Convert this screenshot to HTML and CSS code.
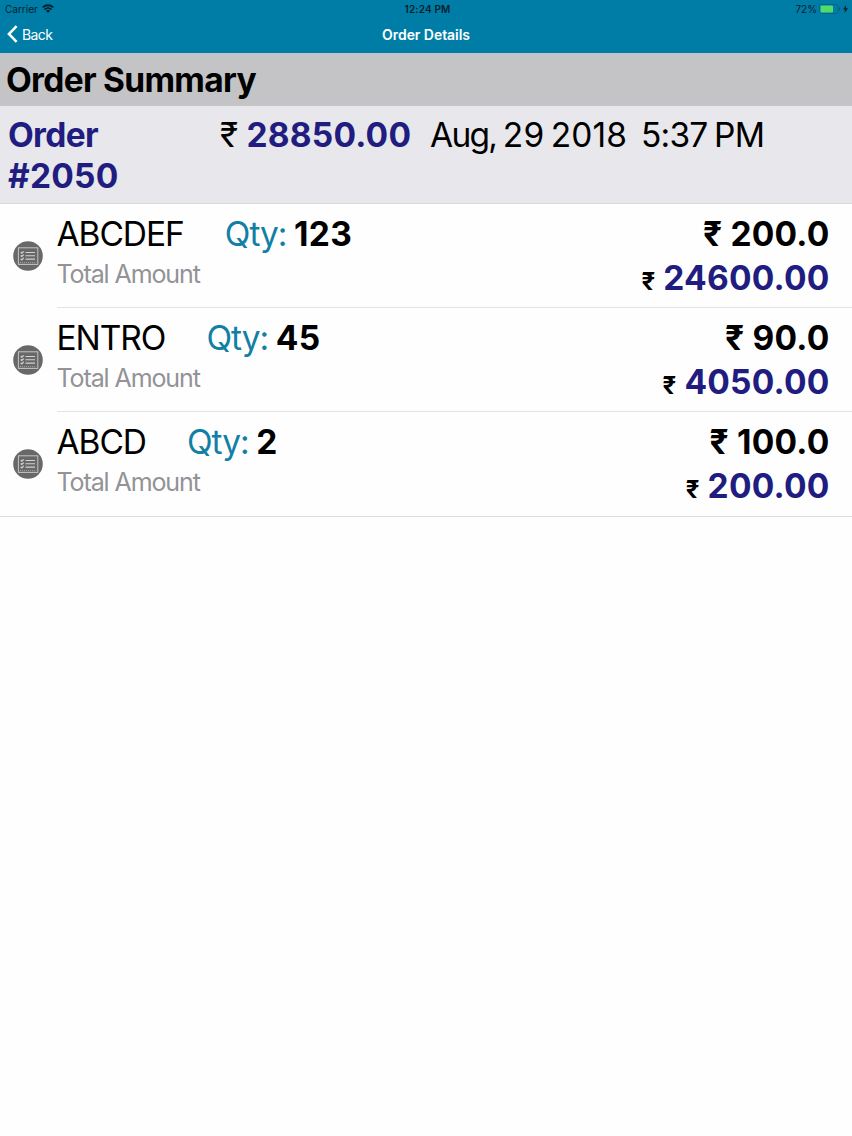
FILE: index.html
```html
<!DOCTYPE html>
<html lang="en">
<head>
    <meta charset="UTF-8">
    <meta name="viewport" content="width=device-width, initial-scale=1.0">
    <title>Order Details</title>
    <link rel="stylesheet" href="styles.css">
</head>
<body>
    <!-- Status bar and navigation bar -->
    <header class="top-bar">
        <div class="status-bar">
            <div class="status-left">
                <span class="carrier">Carrier</span>
                <svg class="wifi-icon" viewBox="0 0 12 9" width="12" height="9">
                    <path d="M0.7 3.4a7.6 7.6 0 0 1 10.6 0M2.5 5.6a5 5 0 0 1 7 0" fill="none" stroke="#06202b" stroke-width="1.8"/>
                    <path d="M6 8.9L4 6.8a2.8 2.8 0 0 1 4 0z" fill="#06202b"/>
                </svg>
            </div>
            <span class="clock">12:24 PM</span>
            <div class="status-right">
                <span class="battery-text">72%</span>
                <svg class="battery-icon" viewBox="0 0 22 10" width="22" height="10">
                    <rect x="0.5" y="0.5" width="18.5" height="9" rx="2" fill="none" stroke="#06648a" stroke-width="1"/>
                    <rect x="1.5" y="1.5" width="12.5" height="7" rx="0.8" fill="#4fdc6b"/>
                    <path d="M20.2 3.2a2 2 0 0 1 0 3.6z" fill="#064f6d"/>
                </svg>
                <svg class="bolt-icon" viewBox="0 0 5 8" width="5" height="8">
                    <path d="M3.2 0L0 4.6h2L1.6 8L5 3.3H2.9z" fill="#06202b"/>
                </svg>
            </div>
        </div>
        <nav class="nav-bar">
            <a class="back-button">
                <svg viewBox="0 0 11 18" width="11" height="18">
                    <path d="M9.6 1.2L1.9 9l7.7 7.8" fill="none" stroke="#fff" stroke-width="2.5"/>
                </svg>
                <span>Back</span>
            </a>
            <h1 class="nav-title">Order Details</h1>
        </nav>
    </header>

    <h2 class="section-title"><span>Order Summary</span></h2>

    <section class="order-header">
        <div class="order-number"><span class="order-word">Order</span> #2050</div>
        <div class="order-total"><span class="rupee">₹</span> 28850.00</div>
        <div class="order-date"><span class="month">Aug,</span> 29 2018</div>
        <div class="order-time">5:37 PM</div>
    </section>

    <!-- Order items -->
    <ul class="item-list">
        <li class="item">
            <svg class="item-icon" viewBox="0 0 30 30" width="30" height="30"><use href="#list-icon"/></svg>
            <div class="item-body">
                <div class="item-info">
                    <div class="item-line"><span class="item-name">ABCDEF</span><span class="qty-label">Qty:</span><span class="qty">123</span></div>
                    <div class="item-sub">Total Amount</div>
                </div>
                <div class="item-prices">
                    <div class="price">₹ 200.0</div>
                    <div class="total"><span class="total-rupee">₹</span>24600.00</div>
                </div>
            </div>
        </li>
        <li class="item">
            <svg class="item-icon" viewBox="0 0 30 30" width="30" height="30"><use href="#list-icon"/></svg>
            <div class="item-body">
                <div class="item-info">
                    <div class="item-line"><span class="item-name">ENTRO</span><span class="qty-label">Qty:</span><span class="qty">45</span></div>
                    <div class="item-sub">Total Amount</div>
                </div>
                <div class="item-prices">
                    <div class="price">₹ 90.0</div>
                    <div class="total"><span class="total-rupee">₹</span>4050.00</div>
                </div>
            </div>
        </li>
        <li class="item">
            <svg class="item-icon" viewBox="0 0 30 30" width="30" height="30"><use href="#list-icon"/></svg>
            <div class="item-body">
                <div class="item-info">
                    <div class="item-line"><span class="item-name">ABCD</span><span class="qty-label">Qty:</span><span class="qty">2</span></div>
                    <div class="item-sub">Total Amount</div>
                </div>
                <div class="item-prices">
                    <div class="price">₹ 100.0</div>
                    <div class="total"><span class="total-rupee">₹</span>200.00</div>
                </div>
            </div>
        </li>
    </ul>

    <!-- Shared checklist icon -->
    <svg width="0" height="0" class="icon-defs">
        <symbol id="list-icon" viewBox="0 0 30 30">
            <circle cx="15" cy="15" r="14.8" fill="#686868"/>
            <rect x="5.4" y="6.8" width="19.4" height="16.6" fill="none" stroke="#c4c4c4" stroke-width="1"/>
            <path d="M7 21.7h16" stroke="#a8a8a8" stroke-width="1" stroke-dasharray="1 1"/>
            <path d="M12.5 11.5h9.5M12.5 14.8h9.5M12.5 18.1h9.5" stroke="#d0d0d0" stroke-width="1.1"/>
            <path d="M7.8 11.2l1 1 1.9-1.9M7.8 14.5l1 1 1.9-1.9M7.8 17.8l1 1 1.9-1.9" fill="none" stroke="#d8d8d8" stroke-width="1.2"/>
        </symbol>
    </svg>
</body>
</html>
```
FILE: styles.css
```css
* {
    box-sizing: border-box;
}
body {
    margin: 0;
    background-color: #fefefe;
    font-family: Inter, 'Liberation Sans', sans-serif;
    color: #000;
}
.top-bar {
    height: 53px;
    background-color: #007da7;
}
.status-bar {
    display: grid;
    grid-template-columns: 1fr auto 1fr;
    align-items: center;
    height: 17px;
    padding: 0 4px 0 5px;
    font-size: 10px;
    color: #06202b;
}
.status-left, .status-right {
    display: flex;
    align-items: center;
}
.status-left {
    gap: 4px;
}
.status-right {
    justify-content: flex-end;
}
.clock {
    padding-left: 2px;
    font-weight: 600;
    letter-spacing: 0.15px;
}
.battery-icon {
    margin-left: 2px;
}
.bolt-icon {
    margin-left: 2px;
}
.nav-bar {
    display: grid;
    grid-template-columns: 1fr auto 1fr;
    align-items: center;
    height: 34px;
    padding: 0 7px;
    color: #fff;
}
.back-button {
    display: flex;
    align-items: center;
    gap: 4px;
    font-size: 14px;
    letter-spacing: -0.6px;
}
.nav-title {
    margin: 0;
    font-size: 14px;
    font-weight: 600;
    letter-spacing: -0.05px;
}
.section-title {
    display: flex;
    align-items: center;
    height: 53px;
    margin: 0;
    padding-left: 6px;
    background-color: #c4c4c7;
    font-size: 33.5px;
    font-weight: 650;
    letter-spacing: -0.7px;
}
.order-header {
    display: flex;
    align-items: flex-start;
    height: 97.5px;
    padding: 9px 8px 0;
    background-color: #e8e7eb;
    border-bottom: 1px solid #d8d7dc;
    font-size: 33.5px;
    line-height: 40.5px;
    white-space: nowrap;
}
.order-number {
    width: 212px;
    padding-right: 60px;
    color: #211d80;
    font-weight: 650;
    letter-spacing: 0.2px;
    white-space: normal;
}
.order-word {
    letter-spacing: -0.7px;
}
.order-total {
    width: 210px;
    color: #211d80;
    font-weight: 650;
    letter-spacing: 0.2px;
}
.rupee {
    color: #000;
    font-weight: 400;
}
.order-date {
    width: 211px;
    letter-spacing: 0.1px;
    word-spacing: -3px;
}
.month {
    letter-spacing: -1.7px;
}
.order-time {
    letter-spacing: -0.8px;
    word-spacing: -2px;
}
.item-list {
    margin: 0;
    padding: 0;
    list-style: none;
    border-bottom: 1px solid #dddde0;
}
.item {
    display: flex;
    align-items: center;
    padding-left: 13px;
}
.item-icon {
    flex: none;
    margin-right: 13.5px;
}
.item-body {
    display: flex;
    flex: 1;
    justify-content: space-between;
    height: 104.2px;
    padding: 10px 22.5px 0 0;
    border-bottom: 1px solid #e3e3e6;
}
.item:last-child .item-body {
    border-bottom: none;
}
.item-line {
    display: flex;
    font-size: 33.5px;
    line-height: 41px;
}
.item-name {
    letter-spacing: -1.05px;
}
.qty-label {
    margin-left: 41px;
    color: #127fa4;
    letter-spacing: -1px;
}
.qty {
    margin-left: 7.5px;
    font-weight: 700;
    letter-spacing: 0.4px;
}
.item-sub {
    font-size: 25px;
    line-height: 39px;
    color: #939296;
    letter-spacing: -1.1px;
}
.item-prices {
    text-align: right;
    font-size: 33.5px;
    font-weight: 650;
    letter-spacing: 0.2px;
    line-height: 41px;
}
.total {
    margin-top: 3.5px;
    color: #211d80;
}
.total-rupee {
    margin-right: 8px;
    color: #000;
    font-size: 24px;
}
.icon-defs {
    display: block;
}
```
